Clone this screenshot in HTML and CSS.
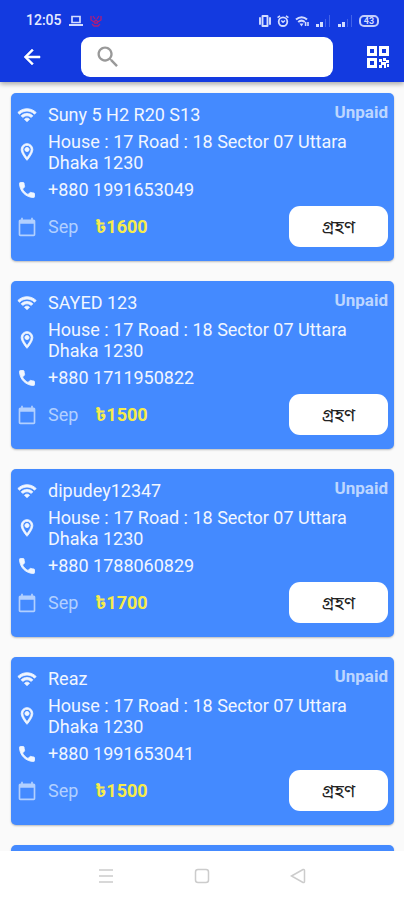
FILE: index.html
```html
<!DOCTYPE html>
<html lang="bn">
<head>
<meta charset="utf-8">
<meta name="viewport" content="width=device-width, initial-scale=1">
<title>Customers</title>
<link rel="stylesheet" href="styles.css">
</head>
<body>
<svg class="sprite" aria-hidden="true">
  <symbol id="wifi" viewBox="0 0 24 24"><path d="M1 9l2 2c4.970-4.970 13.030-4.970 18 0l2-2C16.930 2.930 7.080 2.930 1 9zm8 8l3 3 3-3c-1.650-1.660-4.340-1.660-6 0zm-4-4l2 2c2.760-2.760 7.240-2.760 10 0l2-2C15.140 9.140 8.870 9.140 5 13z"/></symbol>
  <symbol id="place" viewBox="0 0 24 24"><path d="M12 2C8.130 2 5 5.130 5 9c0 5.250 7 13 7 13s7-7.750 7-13c0-3.870-3.130-7-7-7zM7 9c0-2.760 2.240-5 5-5s5 2.240 5 5c0 2.880-2.880 7.190-5 9.880C9.920 16.210 7 11.850 7 9z"/><circle cx="12" cy="9" r="2.500"/></symbol>
  <symbol id="phone" viewBox="0 0 24 24"><path d="M6.620 10.790c1.440 2.830 3.760 5.140 6.590 6.590l2.200-2.200c.27-.27.67-.36 1.020-.24 1.120.37 2.330.57 3.570.57.550 0 1 .45 1 1V20c0 .55-.45 1-1 1-9.390 0-17-7.610-17-17 0-.55.450-1 1-1h3.500c.55 0 1 .45 1 1 0 1.250.2 2.450.57 3.570.11.35.03.74-.25 1.020l-2.200 2.200z"/></symbol>
  <symbol id="calendar" viewBox="0 0 24 24"><path d="M20 3h-1V1h-2v2H7V1H5v2H4c-1.100 0-2 .9-2 2v16c0 1.100.9 2 2 2h16c1.100 0 2-.9 2-2V5c0-1.100-.9-2-2-2zm0 18H4V8h16v13z"/></symbol>
</svg>
<div class="app">
  <header class="header">
    <div class="status">
      <div class="status-group">
        <span class="clock">12:05</span>
        <svg class="laptop" viewBox="0 0 14 12"><path d="M3 1.500h8v6H3z" fill="none" stroke="currentColor" stroke-width="1.700"/><path d="M0 9h14v2H0z" fill="currentColor"/></svg>
        <svg class="alert" viewBox="0 0 12 12"><path d="M1 1v4l3 2 2-2 2 2 3-2V1M3 1l2 3M9 1L7 4M2 9l2 2h4l2-2M4 8h4" fill="none" stroke="currentColor" stroke-width="1.300"/></svg>
      </div>
      <div class="status-group status-right">
        <svg class="s-vibrate" viewBox="0 0 12 12"><path d="M3.500 1h5v10h-5zM1 3v6M11 3v6" fill="none" stroke="currentColor" stroke-width="1.900" stroke-linecap="round" stroke-linejoin="round"/></svg>
        <svg class="s-alarm" viewBox="0 0 12 12"><circle cx="6" cy="6.700" r="4.300" fill="none" stroke="currentColor" stroke-width="1.800"/><path d="M.6 2.600L3 .8M11.400 2.600L9 .8M4.300 5.500L6 7.200l2-1.700" fill="none" stroke="currentColor" stroke-width="1.500"/></svg>
        <svg class="s-wifi" viewBox="0 0 14 12"><path d="M1 4.500c3.400-3 8-3 11 0M3.200 7c2-1.700 4.600-1.700 6.600 0" fill="none" stroke="currentColor" stroke-width="2"/><path d="M4.500 8.500h4L6.500 11.500zM9.800 7h1.600v4H9.800zM12.200 7h1.600v4h-1.600z" fill="currentColor"/></svg>
        <svg class="s-signal" viewBox="0 0 16 12"><path d="M1 9h3v3H1zM5 7h3v5H5z" fill="currentColor"/><path d="M10 4h1v8h-1zM14 0h1v12h-1z" fill="currentColor" opacity=".25"/></svg>
        <svg class="s-signal" viewBox="0 0 16 12"><path d="M1 9h3v3H1zM5 7h3v5H5z" fill="currentColor"/><path d="M10 4h1v8h-1zM14 0h1v12h-1z" fill="currentColor" opacity=".25"/></svg>
        <span class="battery">43</span>
      </div>
    </div>
    <div class="toolbar">
      <button class="icon-button back" type="button" aria-label="Back"><svg viewBox="0 0 24 24"><path d="M20 11H7.830l5.590-5.590L12 4l-8 8 8 8 1.410-1.410L7.830 13H20v-2z" fill="currentColor" stroke="currentColor" stroke-width=".5"/></svg></button>
      <label class="search">
        <svg viewBox="0 0 24 24"><path d="M15.500 14h-.79l-.28-.27C15.410 12.590 16 11.110 16 9.500 16 5.910 13.090 3 9.500 3S3 5.910 3 9.500 5.910 16 9.500 16c1.610 0 3.090-.59 4.230-1.570l.27.28v.79l5 4.990L20.490 19l-4.990-5zm-6 0C7.010 14 5 11.990 5 9.500S7.010 5 9.500 5 14 7.010 14 9.500 11.990 14 9.500 14z" fill="currentColor"/></svg>
        <input type="search" aria-label="Search">
      </label>
      <button class="icon-button scan" type="button" aria-label="Scan QR code"><svg viewBox="0 0 22 22"><path d="M0 0h10v10H0zM3 3v4h4V3zM12 0h10v10H12zM15 3v4h4V3zM0 12h10v10H0zM3 15v4h4v-4z" fill="currentColor" fill-rule="evenodd"/><path d="M12 13h3v3h-3zM16 12h3v3h-3zM19 14h3v3h-3zM14 16h5v3h-5zM12 19h3v3h-3zM17 19h2v3h-2zM20 18h2v3h-2z" fill="currentColor"/></svg></button>
    </div>
  </header>

  <main class="list">
    <article class="card">
      <span class="state">Unpaid</span>
      <div class="row"><svg><use href="#wifi"/></svg><span>Suny 5 H2 R20 S13</span></div>
      <div class="row"><svg><use href="#place"/></svg><span>House : 17 Road : 18 Sector 07 Uttara<br>Dhaka 1230</span></div>
      <div class="row"><svg><use href="#phone"/></svg><span>+880 1991653049</span></div>
      <div class="row billing"><svg><use href="#calendar"/></svg><span class="month">Sep</span><strong class="amount">৳1600</strong><button class="accept" type="button">গ্রহণ</button></div>
    </article>
    <article class="card">
      <span class="state">Unpaid</span>
      <div class="row"><svg><use href="#wifi"/></svg><span>SAYED 123</span></div>
      <div class="row"><svg><use href="#place"/></svg><span>House : 17 Road : 18 Sector 07 Uttara<br>Dhaka 1230</span></div>
      <div class="row"><svg><use href="#phone"/></svg><span>+880 1711950822</span></div>
      <div class="row billing"><svg><use href="#calendar"/></svg><span class="month">Sep</span><strong class="amount">৳1500</strong><button class="accept" type="button">গ্রহণ</button></div>
    </article>
    <article class="card">
      <span class="state">Unpaid</span>
      <div class="row"><svg><use href="#wifi"/></svg><span>dipudey12347</span></div>
      <div class="row"><svg><use href="#place"/></svg><span>House : 17 Road : 18 Sector 07 Uttara<br>Dhaka 1230</span></div>
      <div class="row"><svg><use href="#phone"/></svg><span>+880 1788060829</span></div>
      <div class="row billing"><svg><use href="#calendar"/></svg><span class="month">Sep</span><strong class="amount">৳1700</strong><button class="accept" type="button">গ্রহণ</button></div>
    </article>
    <article class="card">
      <span class="state">Unpaid</span>
      <div class="row"><svg><use href="#wifi"/></svg><span>Reaz</span></div>
      <div class="row"><svg><use href="#place"/></svg><span>House : 17 Road : 18 Sector 07 Uttara<br>Dhaka 1230</span></div>
      <div class="row"><svg><use href="#phone"/></svg><span>+880 1991653041</span></div>
      <div class="row billing"><svg><use href="#calendar"/></svg><span class="month">Sep</span><strong class="amount">৳1500</strong><button class="accept" type="button">গ্রহণ</button></div>
    </article>
    <article class="card"></article>
  </main>

  <nav class="navbar">
    <button class="icon-button" type="button" aria-label="Menu"><svg viewBox="0 0 16 16"><path d="M1 2h14M1 8h14M1 14h14"/></svg></button>
    <button class="icon-button" type="button" aria-label="Home"><svg viewBox="0 0 16 16"><rect x="1.500" y="1.500" width="13" height="13" rx="2.500"/></svg></button>
    <button class="icon-button" type="button" aria-label="Previous screen"><svg viewBox="0 0 16 16"><path d="M1.500 8L13 1.500q1.500-.4 1.500 1v11q0 1.400-1.500 1z"/></svg></button>
  </nav>
</div>
</body>
</html>
```
FILE: styles.css
```css
* { box-sizing: border-box; }

body {
  margin: 0;
  background: #fafafa;
  font-family: Roboto, "Noto Sans Bengali", "Noto Sans", sans-serif;
  font-size: 18px;
  line-height: 21px;
}

button {
  border: 0;
  padding: 0;
  font: inherit;
  color: inherit;
  background: none;
}

svg { display: block; flex: none; }

.sprite { position: absolute; width: 0; height: 0; }

.app {
  display: flex;
  flex-direction: column;
  height: 100vh;
}

.header {
  position: relative;
  flex: none;
  padding: 12px 15px 5px 20px;
  color: #fff;
  background: #133ae0;
  box-shadow: 0 2px 5px rgba(0, 0, 0, .35);
}

.status {
  display: flex;
  justify-content: space-between;
  height: 17px;
  margin-bottom: 8px;
  padding: 0 10px 0 6px;
  color: #d3dcff;
}

.status-group { display: flex; align-items: center; gap: 7px; }
.clock { font-size: 14px; font-weight: 500; line-height: 17px; color: #e6ebff; }
.laptop { width: 14px; height: 12px; }
.alert { width: 12px; height: 12px; color: #b01c78; }
.status-right { gap: 6px; }
.s-vibrate, .s-alarm { width: 12px; height: 12px; }
.s-wifi { width: 14px; height: 12px; }
.s-signal { width: 16px; height: 12px; }

.battery {
  width: 20px;
  height: 12px;
  border: 2px solid #c3cdfb;
  border-radius: 5px;
  font-size: 9px;
  font-weight: 700;
  line-height: 8px;
  text-align: center;
}

.toolbar { display: flex; align-items: center; height: 40px; }
.icon-button { display: grid; flex: none; place-items: center; }
.back svg { width: 24px; height: 24px; }
.scan svg { width: 22px; height: 22px; }

.search {
  display: flex;
  flex: 1;
  align-items: center;
  min-width: 0;
  height: 40px;
  margin: 0 34px 0 37px;
  padding: 0 13px;
  border-radius: 9px;
  color: #999;
  background: #fff;
}

.search svg { width: 28px; height: 28px; }

.search input {
  flex: 1;
  width: 0;
  min-width: 0;
  border: 0;
  outline: 0;
  font: inherit;
  background: none;
}

.list {
  display: flex;
  flex: 1;
  flex-direction: column;
  gap: 20px;
  min-height: 0;
  padding: 11px 10px 0 11px;
  overflow: hidden;
}

.card {
  position: relative;
  display: flex;
  flex: none;
  flex-direction: column;
  gap: 6px;
  min-height: 168px;
  padding: 11px 6px 12px;
  border-radius: 5px;
  color: #f1f6ff;
  background: #448aff;
  box-shadow: 0 1px 2px rgba(0, 0, 0, .25);
}

.state {
  position: absolute;
  top: 9px;
  right: 6px;
  font-size: 17px;
  font-weight: 700;
  color: #bdd6ff;
}

.row { display: flex; align-items: center; gap: 11px; }
.row svg { width: 20px; height: 20px; fill: currentColor; stroke: currentColor; }
.billing { color: #b2d0ff; }
.billing svg { stroke: none; }
.amount { margin-left: 6px; font-weight: 700; color: #f6ec4b; }

.accept {
  width: 99px;
  height: 41px;
  margin-left: auto;
  border-radius: 11px;
  color: #222;
  background: #fff;
}

.navbar {
  display: flex;
  flex: none;
  align-items: center;
  justify-content: center;
  gap: 80px;
  height: 49px;
  background: #fff;
}

.navbar svg {
  width: 16px;
  height: 16px;
  fill: none;
  stroke: #ccc;
  stroke-width: 1.5;
}
```
